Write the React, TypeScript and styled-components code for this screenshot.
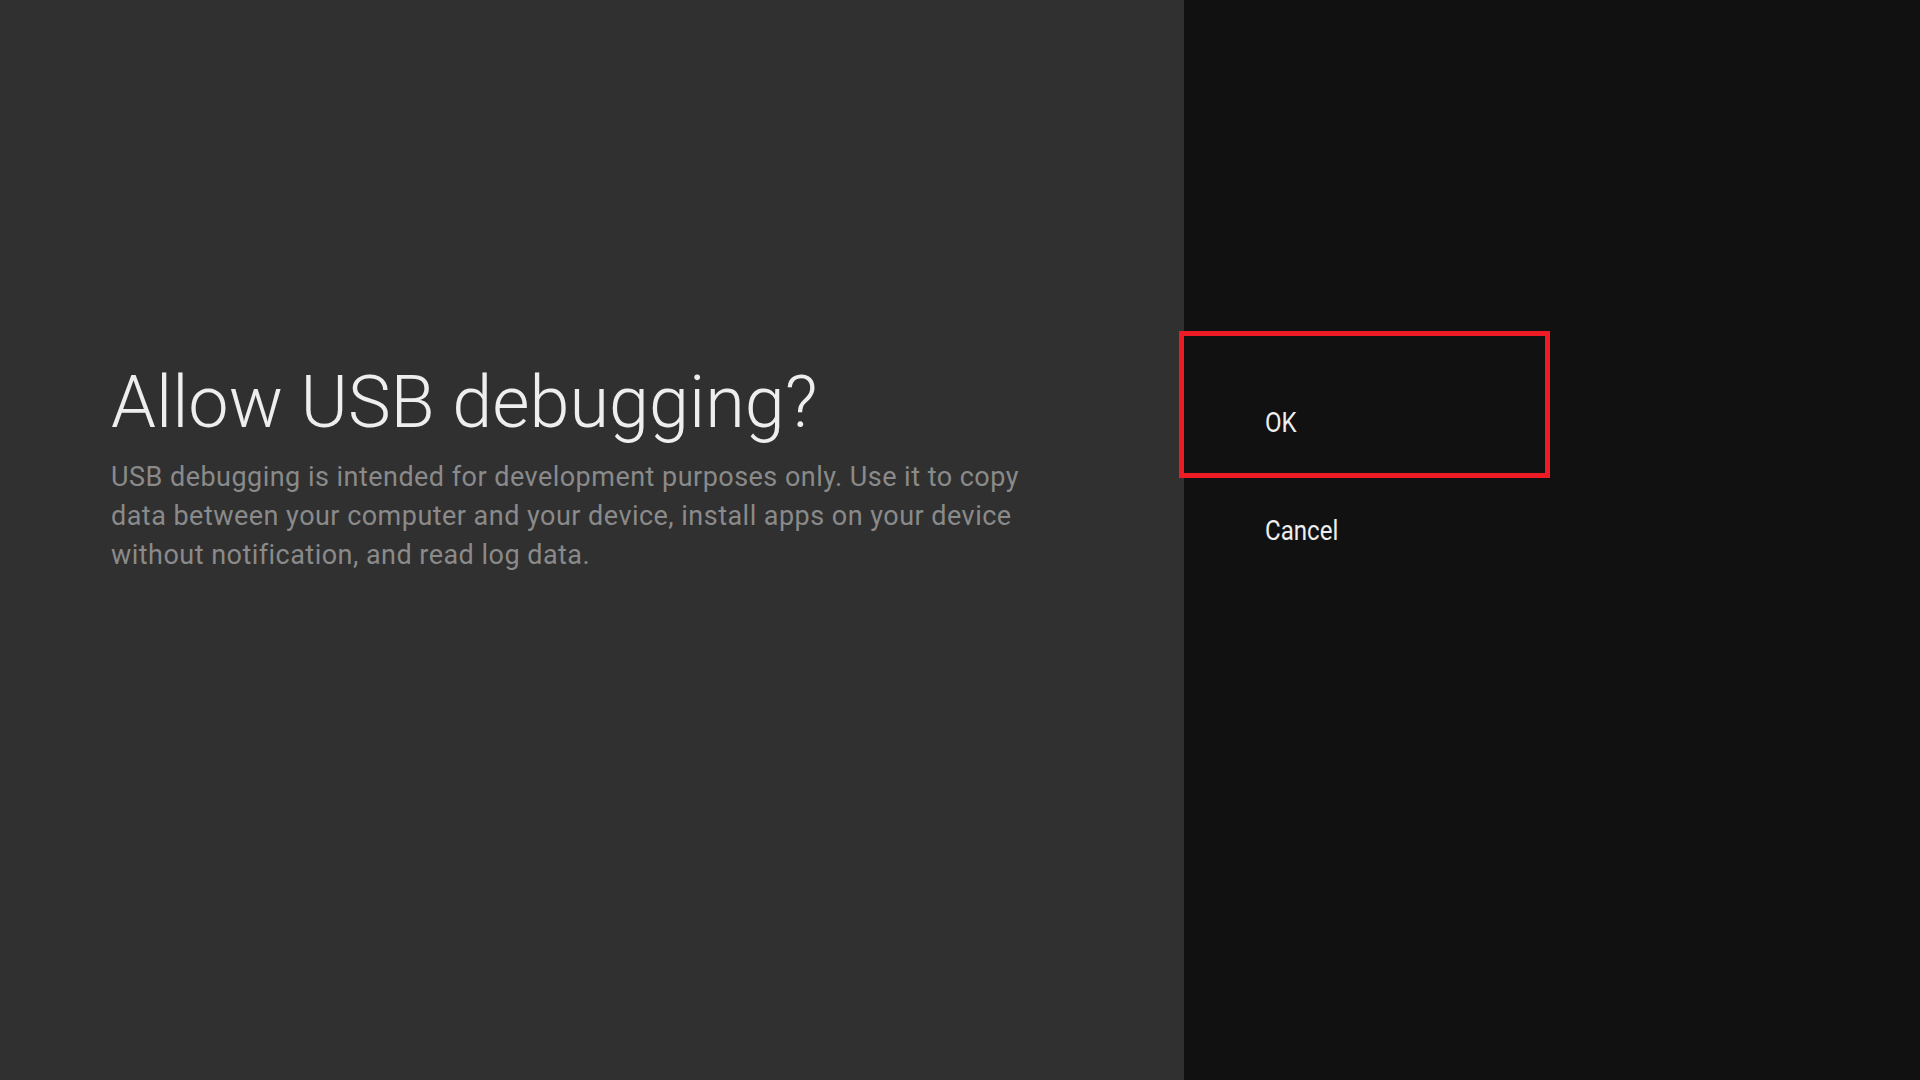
import React from "react";
import styled, { createGlobalStyle } from "styled-components";

const GlobalStyle = createGlobalStyle`
  html, body {
    margin: 0;
    padding: 0;
    background: #111111;
  }
  body {
    font-family: Roboto, "Noto Sans", "Liberation Sans", sans-serif;
  }
`;

const Screen = styled.div`
  display: flex;
  width: 1920px;
  height: 1080px;
  overflow: hidden;
`;

const InfoPanel = styled.section`
  flex: 0 0 1184px;
  background: #303030;
  padding: 361px 0 0 111px;
  box-sizing: border-box;
  display: flex;
  flex-direction: column;
  gap: 13px;
`;

const Title = styled.h1`
  margin: 0;
  font-family: Roboto, "Noto Sans", sans-serif;
  font-weight: 300;
  font-size: 72px;
  line-height: 84px;
  color: #eeeeee;
  white-space: nowrap;
`;

const Description = styled.p`
  margin: 0;
  width: 950px;
  font-family: Roboto, "Noto Sans", sans-serif;
  font-weight: 400;
  font-size: 27px;
  line-height: 39px;
  letter-spacing: 0.47px;
  color: #8a8a8a;
`;

const ActionPanel = styled.section`
  flex: 1;
  background: #111111;
  padding-top: 368px;
  box-sizing: border-box;
  display: flex;
  flex-direction: column;
`;

const ActionItem = styled.div<{ $focused?: boolean }>`
  position: relative;
  width: 361px;
  height: 108px;
  padding-left: 81px;
  box-sizing: border-box;
  display: flex;
  align-items: center;
  font-family: Roboto, "Noto Sans", sans-serif;
  font-size: 28px;
  color: #eeeeee;

  ${({ $focused }) =>
    $focused &&
    `
    &::after {
      content: "";
      position: absolute;
      top: -37px;
      bottom: -2px;
      left: -5px;
      width: 371px;
      border: 5px solid #ed1c24;
      box-sizing: border-box;
      pointer-events: none;
    }
  `}
`;

const ActionLabel = styled.span`
  display: inline-block;
  transform: scaleX(0.86);
  transform-origin: left center;
`;

export default function App() {
  return (
    <>
      <GlobalStyle />
      <Screen>
        <InfoPanel>
          <Title>Allow USB debugging?</Title>
          <Description>
            USB debugging is intended for development purposes only. Use it to copy data between your
            computer and your device, install apps on your device without notification, and read log data.
          </Description>
        </InfoPanel>
        <ActionPanel>
          <ActionItem $focused>
            <ActionLabel>OK</ActionLabel>
          </ActionItem>
          <ActionItem>
            <ActionLabel>Cancel</ActionLabel>
          </ActionItem>
        </ActionPanel>
      </Screen>
    </>
  );
}
